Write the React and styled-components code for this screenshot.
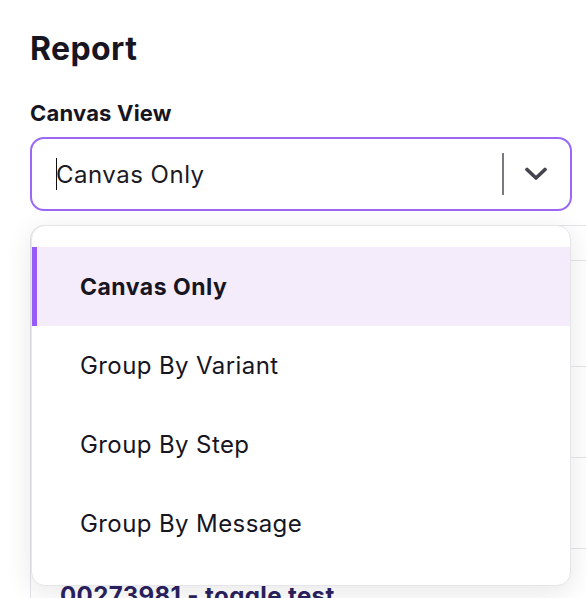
import React from 'react'
import styled, { createGlobalStyle } from 'styled-components'

const GlobalStyle = createGlobalStyle`
  html, body {
    margin: 0;
    background: #ffffff;
    overflow: hidden;
  }
  body {
    font-family: Inter, "Noto Sans", sans-serif;
    color: #17151f;
  }
`

const options = ['Canvas Only', 'Group By Variant', 'Group By Step', 'Group By Message']

const backgroundRows = [
    { height: 35 },
    { height: 106 },
    { height: 91 },
    { height: 91 },
    { height: 91, title: '00273981 - toggle test' },
]

function App() {
    const selected = 'Canvas Only'
    return (
        <>
            <GlobalStyle />
            <Page>
                <Title>Report</Title>
                <Label>Canvas View</Label>
                <Field>
                    <SelectBox>
                        <Value>
                            <Caret />
                            {selected}
                        </Value>
                        <Indicators>
                            <Separator />
                            <Chevron width="24" height="14" viewBox="0 0 24 14">
                                <polyline points="3,2.5 12,11 21,2.5" />
                            </Chevron>
                        </Indicators>
                    </SelectBox>
                    <Menu>
                        {options.map(option => (
                            <Option key={option} active={option === selected}>
                                {option}
                            </Option>
                        ))}
                    </Menu>
                    <ListCard>
                        {backgroundRows.map((row, i) => (
                            <ListRow key={i} style={{ height: row.height }}>
                                {row.title && <RowTitle>{row.title}</RowTitle>}
                            </ListRow>
                        ))}
                    </ListCard>
                </Field>
            </Page>
        </>
    )
}

const Page = styled.div`
    padding: 30px 14px 0 30px;
    height: 598px;
    box-sizing: border-box;
`

const Title = styled.h1`
    margin: 0;
    font-size: 32px;
    line-height: 38px;
    font-weight: 700;
    letter-spacing: 0.4px;
`

const Label = styled.div`
    margin-top: 32px;
    font-size: 22px;
    line-height: 26px;
    font-weight: 700;
    letter-spacing: 0.2px;
`

const Field = styled.div`
    position: relative;
    margin-top: 11px;
`

const SelectBox = styled.div`
    height: 74px;
    box-sizing: border-box;
    border: 2px solid #9a68f5;
    border-radius: 14px;
    display: flex;
    align-items: center;
    padding-left: 24px;
    background: #fff;
`

const Value = styled.div`
    flex: 1;
    display: flex;
    align-items: center;
    font-size: 24px;
    letter-spacing: 0.5px;
    color: #1c1a24;
`

const Caret = styled.span`
    display: inline-block;
    width: 1px;
    height: 32px;
    background: #111;
    margin-right: -1px;
`

const Indicators = styled.div`
    display: flex;
    align-items: center;
    height: 100%;
`

const Separator = styled.span`
    width: 2px;
    height: 42px;
    background: #7a7880;
`

const Chevron = styled.svg`
    margin: 0 22px 0 20px;
    fill: none;
    stroke: #45434d;
    stroke-width: 3.6;
    stroke-linecap: round;
    stroke-linejoin: round;
`

const Menu = styled.div`
    position: absolute;
    z-index: 2;
    top: 88px;
    left: 1px;
    right: 1px;
    background: #fff;
    border: 1px solid #e6e6ea;
    border-radius: 14px;
    padding: 21px 0 22px;
    box-shadow: 0 6px 28px rgba(20, 20, 40, 0.1);
`

const Option = styled.div`
    height: 79px;
    display: flex;
    align-items: center;
    padding-left: ${props => (props.active ? '43px' : '48px')};
    font-size: ${props => (props.active ? '23px' : '24px')};
    letter-spacing: ${props => (props.active ? '0.5px' : '0.4px')};
    font-weight: ${props => (props.active ? 700 : 400)};
    color: #17151f;
    background: ${props => (props.active ? '#f4ebfb' : '#fff')};
    border-left: ${props => (props.active ? '5px solid #975cf6' : 'none')};
`

const ListCard = styled.div`
    margin-top: 14px;
    margin-right: -40px;
    border: 1px solid #e4e4e8;
    border-radius: 14px;
    background: #fff;
`

const ListRow = styled.div`
    box-sizing: border-box;
    border-bottom: 1px solid #e4e4e8;
    padding: 32px 0 0 29px;
`

const RowTitle = styled.div`
    font-size: 24px;
    line-height: 30px;
    font-weight: 700;
    letter-spacing: 0.4px;
    color: #2a2160;
`

export default App
